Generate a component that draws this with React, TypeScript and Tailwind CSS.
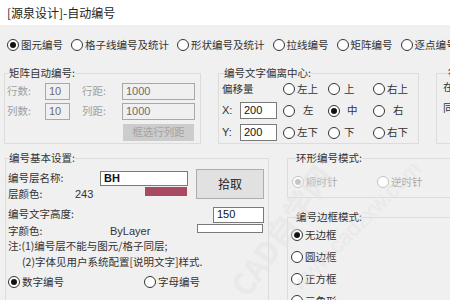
import React from 'react';

const sans = "font-['Noto_Sans_CJK_SC',sans-serif]";
const num = "font-['Liberation_Sans',sans-serif]";

function Radio({ checked = false, disabled = false }: { checked?: boolean; disabled?: boolean }) {
  return (
    <span
      className={`flex h-[12px] w-[12px] shrink-0 items-center justify-center rounded-full border bg-white ${
        disabled ? 'border-[#c4c4c4]' : 'border-[#333]'
      }`}
    >
      {checked && (
        <span className={`h-[6px] w-[6px] rounded-full ${disabled ? 'bg-[#c4c4c4]' : 'bg-[#111]'}`} />
      )}
    </span>
  );
}

function Option({
  label,
  checked,
  disabled,
  className = '',
  textClass = 'ml-[2px]',
}: {
  label: string;
  checked?: boolean;
  disabled?: boolean;
  className?: string;
  textClass?: string;
}) {
  return (
    <div className={`flex items-center ${className}`}>
      <Radio checked={checked} disabled={disabled} />
      <span className={`${textClass} whitespace-nowrap ${disabled ? 'text-[#a8a8a8]' : ''}`}>{label}</span>
    </div>
  );
}

function Field({ value, className = '', disabled = false }: { value: string; className?: string; disabled?: boolean }) {
  return (
    <div
      className={`flex items-center border px-[3px] text-[11px] ${num} ${
        disabled ? 'border-[#a8a8a8] bg-[#f0f0f0] text-[#6d6d6d]' : 'border-[#7a7a7a] bg-white text-[#111]'
      } ${className}`}
    >
      {value}
    </div>
  );
}

export default function App() {
  return (
    <div className={`relative h-[300px] w-[450px] overflow-hidden bg-[#f0f0f0] text-[10.5px] leading-none text-[#333] ${sans}`}>
      {/* Title bar */}
      <div className="flex h-[25px] items-center bg-white pl-[7px] text-[12px] text-[#222]">[源泉设计]-自动编号</div>

      {/* Mode selector */}
      <div className="mt-[10px] flex h-[20px] items-center gap-[8px] pl-[7px]">
        <Option label="图元编号" checked />
        <Option label="格子线编号及统计" />
        <Option label="形状编号及统计" />
        <Option label="拉线编号" />
        <Option label="矩阵编号" />
        <Option label="逐点编号" />
      </div>

      {/* Top groups */}
      <div className="mt-[11px] flex">
        <fieldset className="ml-[4px] h-[78px] w-[197px] shrink-0 border border-[#dcdcdc] pl-[2px]">
          <legend className="ml-[2px] h-[14px] leading-[14px]">矩阵自动编号:</legend>
          <div className="mt-[3px] flex h-[17px] items-center text-[#a0a0a0]">
            <span className="w-[38px]">行数:</span>
            <Field value="10" disabled className="h-[17px] w-[25px]" />
            <span className="ml-[12px] w-[40px]">行距:</span>
            <Field value="1000" disabled className="h-[17px] w-[73px]" />
          </div>
          <div className="mt-[3px] flex h-[17px] items-center text-[#a0a0a0]">
            <span className="w-[38px]">列数:</span>
            <Field value="10" disabled className="h-[17px] w-[25px]" />
            <span className="ml-[12px] w-[40px]">列距:</span>
            <Field value="1000" disabled className="h-[17px] w-[73px]" />
          </div>
          <div className="mt-[4px] flex">
            <div className="ml-[116px] flex h-[17px] w-[71px] items-center justify-center bg-[#cccccc] text-[#a3a3a3]">
              框选行列距
            </div>
          </div>
        </fieldset>

        <fieldset className="ml-[17px] h-[78px] w-[200px] shrink-0 border border-[#dcdcdc] pl-[3px]">
          <legend className="ml-[2px] h-[14px] leading-[14px]">编号文字偏离中心:</legend>
          <div className="mt-[1px] flex h-[16px] items-center">
            <span className="w-[61px]">偏移量</span>
            <Option label="左上" className="w-[45px]" />
            <Option label="上" className="w-[45px]" textClass="ml-[4px]" />
            <Option label="右上" className="w-[45px]" />
          </div>
          <div className="mt-[5px] flex h-[17px] items-center">
            <span className={`w-[18px] ${num} text-[11px]`}>X:</span>
            <Field value="200" className="h-[17px] w-[37px]" />
            <div className="ml-[6px] flex">
              <Option label="左" className="w-[45px]" textClass="ml-[8px]" />
              <Option label="中" checked className="w-[45px]" textClass="ml-[7px]" />
              <Option label="右" className="w-[45px]" textClass="ml-[8px]" />
            </div>
          </div>
          <div className="mt-[5px] flex h-[17px] items-center">
            <span className={`w-[18px] ${num} text-[11px]`}>Y:</span>
            <Field value="200" className="h-[17px] w-[37px]" />
            <div className="ml-[6px] flex">
              <Option label="左下" className="w-[45px]" />
              <Option label="下" className="w-[45px]" textClass="ml-[4px]" />
              <Option label="右下" className="w-[45px]" />
            </div>
          </div>
        </fieldset>

        <fieldset className="ml-[17px] h-[78px] w-[60px] shrink-0 border border-[#dcdcdc] pl-[6px]">
          <legend className="ml-[5px] h-[14px] leading-[14px]">行</legend>
          <div className="mt-[2px] whitespace-nowrap">在</div>
          <div className="mt-[10px] whitespace-nowrap">同</div>
        </fieldset>
      </div>

      {/* Bottom section */}
      <div className="mt-[7px] flex">
        <fieldset className="ml-[5px] h-[170px] w-[264px] shrink-0 border border-[#dcdcdc] pl-[2px]">
          <legend className="ml-[1px] h-[14px] leading-[14px]">编号基本设置:</legend>
          <div className="flex">
            <div className="flex flex-col">
              <div className="mt-[6px] flex h-[14px] items-center">
                <span className="w-[92px]">编号层名称:</span>
                <Field value="BH" className="h-[15px] w-[88px] font-bold" />
              </div>
              <div className="mt-[2px] flex h-[14px] items-center">
                <span className="w-[67px]">层颜色:</span>
                <span className={`w-[70px] ${num} text-[11px]`}>243</span>
                <span className="h-[9px] w-[42px] self-start bg-[#a94a62]" />
              </div>
            </div>
            <div className="ml-[8px] mt-[4px] flex h-[30px] w-[68px] items-center justify-center border border-[#adadad] bg-[#e1e1e1] text-[12px] text-[#222]">
              拾取
            </div>
          </div>
          <div className="mt-[6px] flex h-[15px] items-center">
            <span className="w-[205px]">编号文字高度:</span>
            <Field value="150" className="h-[16px] w-[51px]" />
          </div>
          <div className="mt-[2px] flex h-[14px] items-center">
            <span className="w-[102px]">字颜色:</span>
            <span className={`w-[87px] ${num} text-[11px]`}>ByLayer</span>
            <span className="h-[9px] w-[66px] self-start border border-[#7a7a7a] bg-white" />
          </div>
          <div className="flex h-[16px] items-center whitespace-nowrap">注:(1)编号层不能与图元/格子同层;</div>
          <div className="flex h-[16px] items-center whitespace-nowrap pl-[14px]">(2)字体见用户系统配置[说明文字]样式.</div>
          <div className="mt-[4px] flex h-[16px] items-center">
            <Option label="数字编号" checked className="w-[136px]" />
            <Option label="字母编号" />
          </div>
        </fieldset>

        <div className="ml-[18px] flex w-[170px] shrink-0 flex-col">
          <fieldset className="h-[47px] border border-[#dcdcdc] pl-[4px]">
            <legend className="ml-[4px] h-[14px] leading-[14px]">环形编号模式:</legend>
            <div className="mt-[10px] flex h-[14px] items-center">
              <Option label="顺时针" checked disabled className="w-[85px]" />
              <Option label="逆时针" disabled />
            </div>
          </fieldset>
          <fieldset className="mt-[12px] h-[120px] border border-[#dcdcdc] pl-[3px]">
            <legend className="ml-[5px] h-[14px] leading-[14px]">编号边框模式:</legend>
            <div className="mt-[3px] flex flex-col gap-[6px]">
              <Option label="无边框" checked className="h-[16px]" />
              <Option label="圆边框" className="h-[16px]" />
              <Option label="正方框" className="h-[16px]" />
              <Option label="三角形" className="h-[16px]" />
            </div>
          </fieldset>
        </div>
      </div>

      {/* Watermark */}
      <div className="pointer-events-none absolute left-[205px] top-[215px] -rotate-[55deg] whitespace-nowrap text-[30px] font-bold text-[#e4e4e4] opacity-50">
        CAD自学网
      </div>
      <div className={`pointer-events-none absolute left-[270px] top-[215px] -rotate-[45deg] whitespace-nowrap text-[22px] text-[#e4e4e4] opacity-50 ${num}`}>
        www.cadzxw.com
      </div>
    </div>
  );
}
